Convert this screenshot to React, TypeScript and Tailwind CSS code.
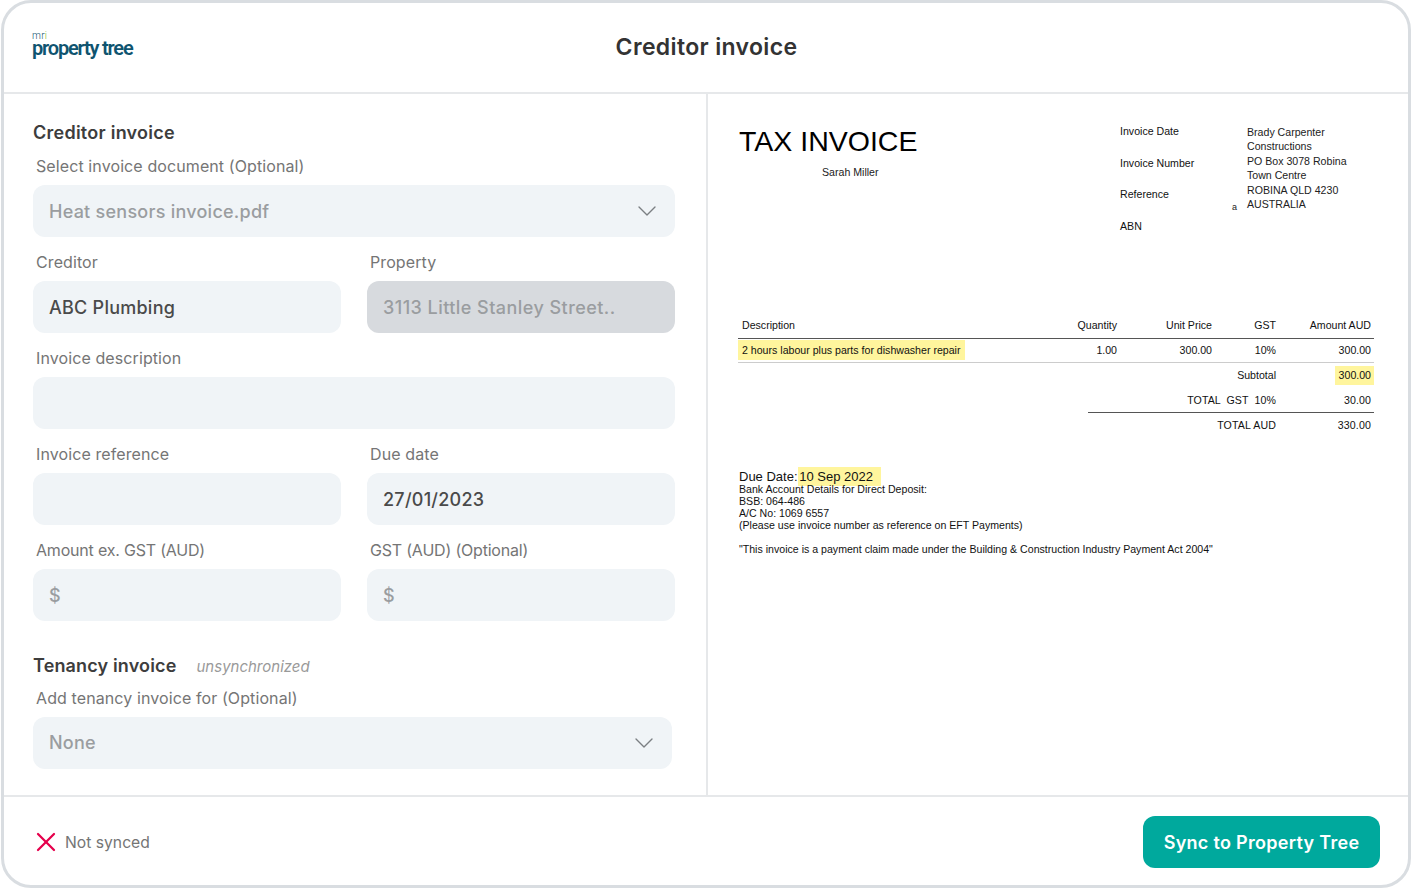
import React from "react";
import { ChevronDown, X } from "lucide-react";

const ui = "font-['Inter','Liberation_Sans',sans-serif]";
const doc = "font-['Liberation_Sans',Arial,sans-serif]";

function Label({ children, tight }: { children: React.ReactNode; tight?: boolean }) {
  return <div className={`h-[44px] pl-[3px] pb-[9px] flex items-end text-[16px] leading-[20px] text-[#757575] ${tight ? "tracking-[-0.2px]" : "tracking-[0.1px]"}`}>{children}</div>;
}

function Field({ label, value, muted, disabled, chevron, tight, className }: { label: string; value?: string; muted?: boolean; disabled?: boolean; chevron?: boolean; tight?: boolean; className?: string }) {
  return (
    <div className={className}>
      <Label tight={tight}>{label}</Label>
      <div className={`h-[52px] rounded-[12px] pl-[16px] pr-[12px] flex items-center justify-between text-[18px] font-medium ${disabled ? "bg-[#d7dade] tracking-[0.45px]" : "bg-[#f0f4f7] tracking-[0.25px]"} ${muted ? "text-[#9a9da0]" : "text-[#4a4a4a]"}`}>
        <span>{value}</span>
        {chevron && <ChevronDown size={32} strokeWidth={1} className="text-[#7b7f83]" />}
      </div>
    </div>
  );
}

function Row({ cells, className }: { cells: React.ReactNode[]; className?: string }) {
  return (
    <div className={`flex items-center text-[10.6px] text-[#111] ${className ?? ""}`}>
      <div className="w-[284px] h-full flex items-center whitespace-nowrap">{cells[0]}</div>
      <div className="w-[95px] text-right">{cells[1]}</div>
      <div className="w-[95px] text-right">{cells[2]}</div>
      <div className="w-[64px] text-right">{cells[3]}</div>
      <div className="w-[98px] pr-[3px] text-right">{cells[4]}</div>
    </div>
  );
}

function TotalRow({ label, value, highlight, className }: { label: string; value: string; highlight?: boolean; className?: string }) {
  return (
    <div className={`h-[25px] flex items-center justify-end text-[10.6px] text-[#111] ${className ?? ""}`}>
      <span>{label}</span>
      <div className="w-[98px] h-full flex items-center justify-end">
        <span className={`h-[19px] leading-[19px] pr-[3px] pl-[4px] ${highlight ? "bg-[#fff59d]" : ""}`}>{value}</span>
      </div>
    </div>
  );
}

export default function App() {
  return (
    <div className={`w-[1411px] h-[889px] bg-white ${ui}`}>
      <div className="ml-[1px] w-[1410px] h-[888px] border-[3px] border-[#d9dde1] rounded-[30px] flex flex-col overflow-hidden">
        <header className="h-[91px] shrink-0 border-b-2 border-[#e6e8ea] flex items-center relative pl-[28px]">
          <div className="text-[#0f5470] font-['Roboto',sans-serif] -mt-[6px]">
            <div className="text-[10px] leading-[6px] h-[6px] font-light tracking-[0.3px]">mr<span className="text-[#9dbb3a]">i</span></div>
            <div className="text-[20px] leading-[18px] font-semibold tracking-[-1.2px]">property tree</div>
          </div>
          <div className="absolute left-[1px] right-0 text-center text-[23px] font-semibold tracking-[0.35px] text-[#333]">Creditor invoice</div>
        </header>

        <main className="flex-1 flex min-h-0">
          <section className="w-[704px] shrink-0 border-r-2 border-[#e6e8ea] pl-[29px] pr-[31px] pt-[27px]">
            <h2 className="text-[18px] leading-[24px] font-semibold text-[#3d3d3d] tracking-[0.25px]">Creditor invoice</h2>
            <div className="-mt-[4px]">
              <Field label="Select invoice document (Optional)" value="Heat sensors invoice.pdf" muted chevron />
              <div className="flex gap-[26px]">
                <Field className="w-[308px]" label="Creditor" value="ABC Plumbing" />
                <Field className="w-[308px]" label="Property" value="3113 Little Stanley Street.." muted disabled />
              </div>
              <Field label="Invoice description" />
              <div className="flex gap-[26px]">
                <Field className="w-[308px]" label="Invoice reference" />
                <Field className="w-[308px]" label="Due date" value="27/01/2023" />
              </div>
              <div className="flex gap-[26px]">
                <Field className="w-[308px]" tight label="Amount ex. GST (AUD)" value="$" muted />
                <Field className="w-[308px]" tight label="GST (AUD) (Optional)" value="$" muted />
              </div>
            </div>
            <div className="mt-[33px] flex items-baseline gap-[20px]">
              <h2 className="text-[18px] leading-[24px] font-semibold text-[#3d3d3d] tracking-[0.15px]">Tenancy invoice</h2>
              <span className="text-[15px] italic text-[#9a9a9a]">unsynchronized</span>
            </div>
            <div className="-mt-[6px] w-[639px]">
              <Field label="Add tenancy invoice for (Optional)" value="None" muted chevron />
            </div>
          </section>

          <section className={`flex-1 pl-[31px] pr-[33px] pt-[29px] text-black ${doc}`}>
            <div className="flex h-[192px]">
              <div className="w-[381px]">
                <div className="text-[28.5px] leading-[36px] text-black">TAX INVOICE</div>
                <div className="text-[10.6px] leading-[14px] mt-[6px] ml-[83px] text-[#222]">Sarah Miller</div>
              </div>
              <div className="w-[127px] text-[10.6px] leading-[13px] text-[#111] flex flex-col gap-[18.7px] pt-[2px]">
                <div>Invoice Date</div>
                <div>Invoice Number</div>
                <div>Reference</div>
                <div>ABN</div>
              </div>
              <div className="relative text-[10.6px] leading-[14.4px] text-[#222] pt-[2px]">
                <div>Brady Carpenter</div>
                <div>Constructions</div>
                <div>PO Box 3078 Robina</div>
                <div>Town Centre</div>
                <div>ROBINA QLD 4230</div>
                <div>AUSTRALIA</div>
                <span className="absolute -left-[15px] top-[77px] text-[9px]">a</span>
              </div>
            </div>

            <div className="w-[636px] -ml-[1px]">
              <Row
                className="h-[24px] pb-[2px] border-b border-[#555]"
                cells={[<span className="pl-[4px]">Description</span>, "Quantity", "Unit Price", "GST", "Amount AUD"]}
              />
              <Row
                className="h-[24px] border-b border-[#ccc]"
                cells={[<span className="bg-[#fff59d] h-[20px] leading-[20px] mb-[1px] pl-[4px] pr-[5px]">2 hours labour plus parts for dishwasher repair</span>, "1.00", "300.00", "10%", "300.00"]}
              />
              <TotalRow label="Subtotal" value="300.00" highlight />
              <TotalRow label="TOTAL  GST  10%" value="30.00" className="ml-[350px] pt-[1px] border-b border-[#555] whitespace-pre tracking-[0.1px]" />
              <TotalRow label="TOTAL AUD" value="330.00" className="tracking-[0.15px]" />
            </div>

            <div className="mt-[29px] text-[#111]">
              <div className="h-[19px] leading-[19px] text-[13px]">
                Due Date: <span className="bg-[#fff59d] inline-block h-[19px] -ml-[3px] pl-[1px] pr-[8px]">10 Sep 2022</span>
              </div>
              <div className="-mt-[3px] text-[10.6px] leading-[12px]">
                <div>Bank Account Details for Direct Deposit:</div>
                <div>BSB: 064-486</div>
                <div>A/C No: 1069 6557</div>
                <div>(Please use invoice number as reference on EFT Payments)</div>
                <div className="mt-[12px]">"This invoice is a payment claim made under the Building &amp; Construction Industry Payment Act 2004"</div>
              </div>
            </div>
          </section>
        </main>

        <footer className="h-[90px] shrink-0 border-t-2 border-[#e6e8ea] flex items-center justify-between pl-[26px] pr-[28px] pt-[2px]">
          <div className="flex items-center gap-[3px] text-[15.7px] text-[#757575]">
            <X size={32} strokeWidth={1.7} className="text-[#e5004c]" />
            <span className="pt-[1px]">Not synced</span>
          </div>
          <button className="w-[237px] h-[52px] rounded-[12px] bg-[#00a99d] text-white text-[18px] font-semibold tracking-[0.3px]">Sync to Property Tree</button>
        </footer>
      </div>
    </div>
  );
}
